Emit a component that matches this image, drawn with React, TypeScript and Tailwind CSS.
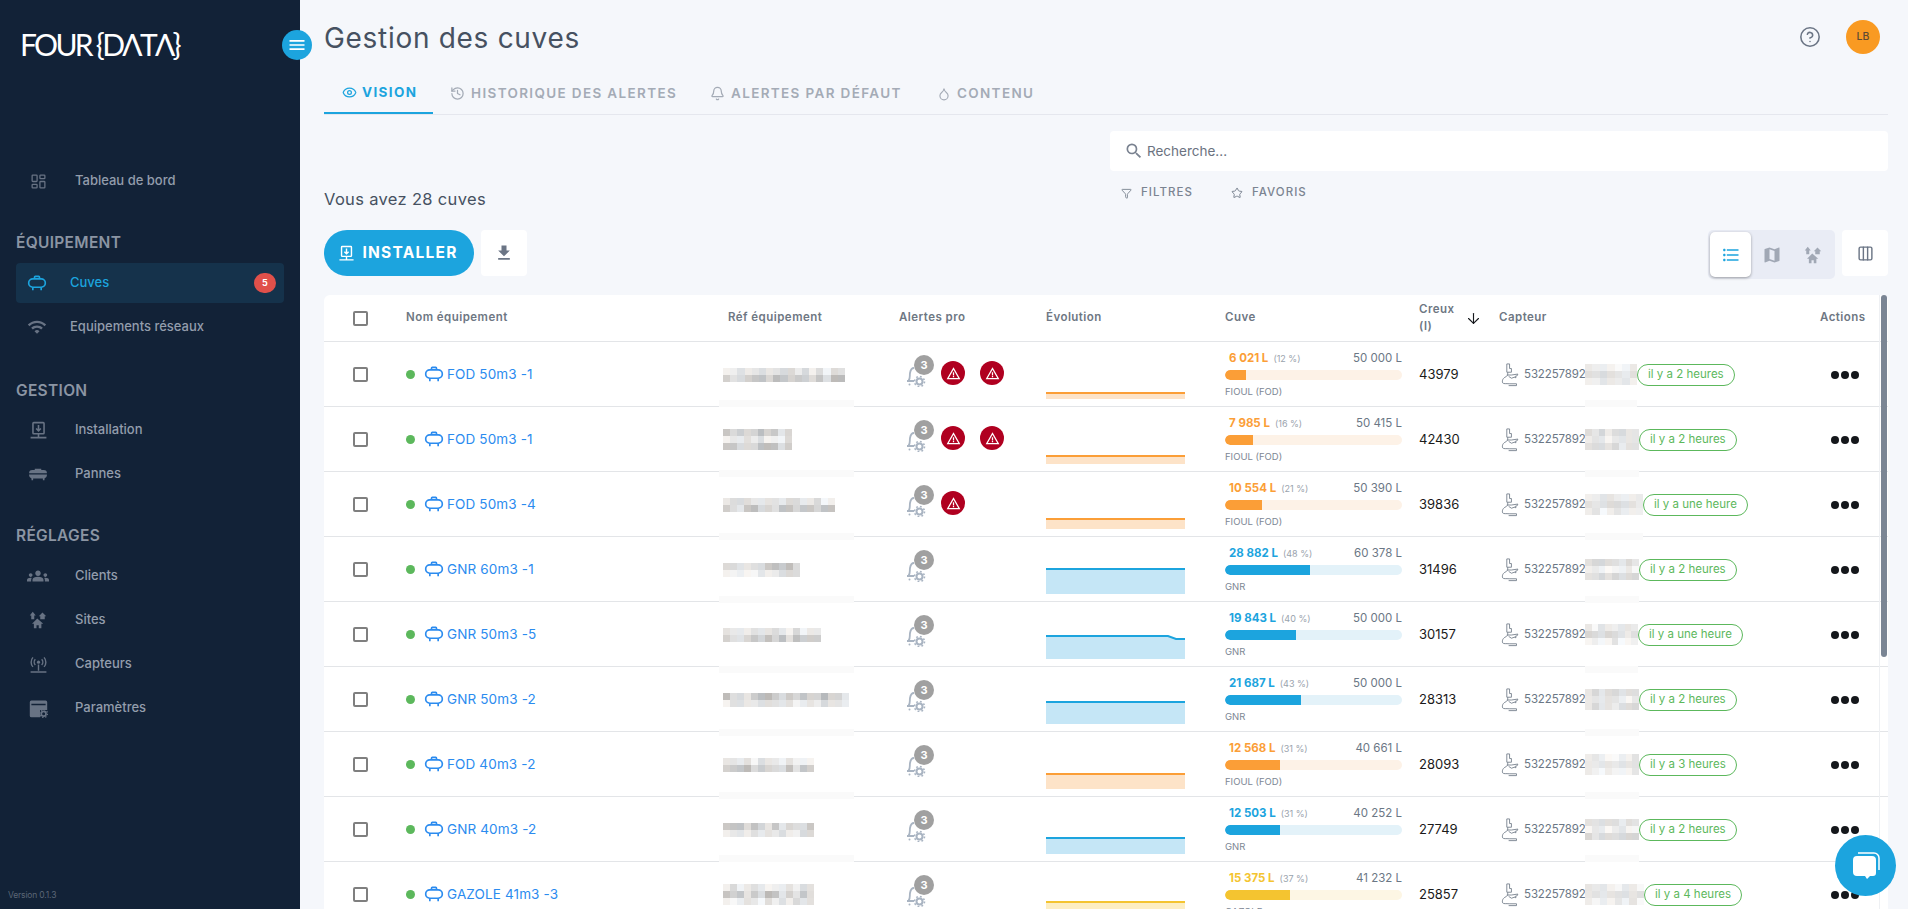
import { ArrowDown, Bell, Droplet, Eye, Funnel, Columns3, LayoutDashboard, Star, History, CircleHelp } from "lucide-react";
import { MdFileDownload, MdFormatListBulleted, MdGroups, MdMap, MdMenu, MdSearch, MdWarningAmber, MdWifi } from "react-icons/md";

const FONT = "font-['Inter','Liberation_Sans',sans-serif]";

type Fuel = "fod" | "gnr" | "gaz";

interface Row {
  name: string;
  vol: string;
  pct: number;
  cap: string;
  fuel: Fuel;
  creux: number;
  seen: string;
  alerts: number;
  refW: number;
  refRows: number;
  capW: number;
  band: number;
  line: number;
}

const rows: Row[] = [
  { name: "FOD 50m3 -1", vol: "6 021 L", pct: 12, cap: "50 000 L", fuel: "fod", creux: 43979, seen: "il y a 2 heures", alerts: 2, refW: 122, refRows: 2, capW: 52, band: -6, line: 51 },
  { name: "FOD 50m3 -1", vol: "7 985 L", pct: 16, cap: "50 415 L", fuel: "fod", creux: 42430, seen: "il y a 2 heures", alerts: 2, refW: 69, refRows: 3, capW: 54, band: -1, line: 49 },
  { name: "FOD 50m3 -4", vol: "10 554 L", pct: 21, cap: "50 390 L", fuel: "fod", creux: 39836, seen: "il y a une heure", alerts: 1, refW: 112, refRows: 2, capW: 58, band: -3, line: 47 },
  { name: "GNR 60m3 -1", vol: "28 882 L", pct: 48, cap: "60 378 L", fuel: "gnr", creux: 31496, seen: "il y a 2 heures", alerts: 0, refW: 77, refRows: 2, capW: 54, band: -5, line: 32 },
  { name: "GNR 50m3 -5", vol: "19 843 L", pct: 40, cap: "50 000 L", fuel: "gnr", creux: 30157, seen: "il y a une heure", alerts: 0, refW: 98, refRows: 2, capW: 53, band: 0, line: 34 },
  { name: "GNR 50m3 -2", vol: "21 687 L", pct: 43, cap: "50 000 L", fuel: "gnr", creux: 28313, seen: "il y a 2 heures", alerts: 0, refW: 126, refRows: 2, capW: 54, band: -2, line: 35 },
  { name: "FOD 40m3 -2", vol: "12 568 L", pct: 31, cap: "40 661 L", fuel: "fod", creux: 28093, seen: "il y a 3 heures", alerts: 0, refW: 91, refRows: 2, capW: 54, band: -4, line: 42 },
  { name: "GNR 40m3 -2", vol: "12 503 L", pct: 31, cap: "40 252 L", fuel: "gnr", creux: 27749, seen: "il y a 2 heures", alerts: 0, refW: 91, refRows: 2, capW: 54, band: -6, line: 41 },
  { name: "GAZOLE 41m3 -3", vol: "15 375 L", pct: 37, cap: "41 232 L", fuel: "gaz", creux: 25857, seen: "il y a 4 heures", alerts: 0, refW: 91, refRows: 3, capW: 59, band: -1, line: 40 },
];

const fuels = {
  fod: { label: "FIOUL (FOD)", text: "text-[#fb9e37]", fill: "bg-[#fb9e37]", track: "bg-[#fdf2e7]", stroke: "#fb9e37", area: "#fde3c8" },
  gnr: { label: "GNR", text: "text-[#1ca4de]", fill: "bg-[#1ca4de]", track: "bg-[#e3f2f9]", stroke: "#1ca4de", area: "#c5e6f6" },
  gaz: { label: "GAZOLE", text: "text-[#f4c430]", fill: "bg-[#f4c430]", track: "bg-[#fdf6e4]", stroke: "#f4c430", area: "#fdeec2" },
};

const COLS = "grid grid-cols-[82px_322px_171px_147px_179px_194px_80px_321px_1fr] items-center";

// tank drawn the same way in the menu and in the table
const TankIcon = ({ className }: { className?: string }) => (
  <svg viewBox="0 0 24 20" fill="none" stroke="currentColor" strokeWidth="2" className={className}>
    <rect x="2" y="4.5" width="20" height="10" rx="5" />
    <path d="M9 4.5V2.5a1 1 0 0 1 1-1h4a1 1 0 0 1 1 1v2M7 14.5V18M17 14.5V18" />
  </svg>
);

const PannesIcon = ({ className }: { className?: string }) => (
  <svg viewBox="0 0 24 16" fill="currentColor" className={className}>
    <path d="M5 2.5h3V1h8v1.500h3a4 4 0 0 1 4 4H1a4 4 0 0 1 4-4zM1 8h22v1a4 4 0 0 1-3 3.800V15h-2v-2H6v2H4v-2.200A4 4 0 0 1 1 9z" />
  </svg>
);

const InstallIcon = ({ className }: { className?: string }) => (
  <svg viewBox="0 0 24 24" fill="none" stroke="currentColor" strokeWidth="2" className={className}>
    <rect x="5" y="2" width="14" height="14" rx="1" />
    <path d="M12 5v7M9 9.500l3 3 3-3M12 16v5M2 21h20" />
  </svg>
);

const SitesIcon = ({ className }: { className?: string }) => (
  <svg viewBox="0 0 24 24" fill="currentColor" className={className}>
    <path d="M5 1 1 6h2v5h4V6h2zM18 2l-5 5h2v4h6V7h2zM11 10l-7 7h2.500v6H10v-4h3v4h3.500v-6H19z" />
  </svg>
);

const AntennaIcon = ({ className }: { className?: string }) => (
  <svg viewBox="0 0 24 24" fill="none" stroke="currentColor" strokeWidth="1.800" className={className}>
    <circle cx="12" cy="9" r="2" fill="currentColor" stroke="none" />
    <path d="M8 5.500a5 5 0 0 0 0 7M16 5.500a5 5 0 0 1 0 7M5 3a9 9 0 0 0 0 12M19 3a9 9 0 0 1 0 12M12 12v8M2 21.500h20" />
  </svg>
);

const ParamsIcon = ({ className }: { className?: string }) => (
  <svg viewBox="0 0 24 24" className={className}>
    <path fill="currentColor" d="M3 2h18a2 2 0 0 1 2 2v10h-9v9H3a2 2 0 0 1-2-2V4a2 2 0 0 1 2-2zm0 4v2h18V6z" />
    <circle cx="18.500" cy="18.500" r="3" fill="none" stroke="currentColor" strokeWidth="2.200" />
    <circle cx="18.500" cy="18.500" r="5" fill="none" stroke="currentColor" strokeWidth="1.400" strokeDasharray="1.800 2.100" />
  </svg>
);

// small hand-drawn probe in the sensor column
const ProbeIcon = () => (
  <svg viewBox="0 0 20 26" fill="none" stroke="#7b8490" strokeWidth="1" className="h-[24px] w-[19px] shrink-0">
    <path d="M6 1h3v5h2v4H6zM7 10v3l-2 2M6 13h5l7-1-1 2-2 .5 1 1.500-2-.5-3 1-3-2" />
    <path d="M5 15c-3 1-4.500 4-3.500 6.500 1 1.500 4 .5 7 1h8v2H8" />
  </svg>
);

const AlertBell = () => (
  <div className="relative h-[28px] w-[26px]">
    <svg viewBox="0 0 22 24" fill="none" stroke="#a9b4c2" strokeWidth="1.800" className="absolute bottom-0 left-0 h-[24px] w-[22px]">
      <path d="M2 18h7M3.500 18c2-3 1-5 1.500-8 .5-3 2-5 4-5" />
      <circle cx="4.500" cy="21.500" r="1" fill="#a9b4c2" stroke="none" />
      <circle cx="14.500" cy="18.500" r="3" strokeWidth="2" />
      <circle cx="14.500" cy="18.500" r="5" strokeWidth="1.600" strokeDasharray="1.800 2.100" />
    </svg>
    <span className="absolute right-[-3px] top-[-4px] flex h-[20px] w-[20px] items-center justify-center rounded-full bg-[#a0a0a0] text-[11px] font-bold text-white">3</span>
  </div>
);

// pixelated patch standing in for masked values
const Mosaic = ({ width, seed, rowsCount, light }: { width: number; seed: number; rowsCount: number; light?: boolean }) => {
  const cols = Math.max(1, Math.round(width / 7));
  return (
    <div className="flex flex-col" style={{ width }}>
      {Array.from({ length: rowsCount }).map((_, r) => (
        <div key={r} className="flex h-[7px]">
          {Array.from({ length: cols }).map((_, c) => {
            const n = Math.abs(Math.sin(seed * 12.9 + c * 78.2 + r * 37.7) * 43758.5) % 1;
            const dark = (r + seed) % 2 === 0;
            const shade = light
              ? Math.round((dark ? 212 : 226) + n * 24)
              : Math.round((dark ? 184 : 216) + n * (dark ? 48 : 32));
            const tint = c % 3 === 0 ? 3 : c % 3 === 1 ? 0 : -3;
            return <span key={c} className="flex-1" style={{ backgroundColor: `rgb(${shade + tint},${shade},${shade - tint})` }} />;
          })}
        </div>
      ))}
    </div>
  );
};

const Band = ({ left, width, offset }: { left: number; width: number; offset: number }) => (
  <span className="absolute h-[7px] bg-[#fafafa]" style={{ left, width, top: 64 + offset }} />
);

const Sparkline = ({ line, fuel, drop }: { line: number; fuel: Fuel; drop?: boolean }) => {
  const f = fuels[fuel];
  const d = drop
    ? `M0 ${line} H122 L130 ${line + 3} H139`
    : `M0 ${line} H139`;
  return (
    <svg viewBox="0 0 140 65" className="h-[65px] w-[140px]">
      <path d={`${d} V57 H0 Z`} fill={f.area} />
      <path d={d} fill="none" stroke={f.stroke} strokeWidth="2" />
    </svg>
  );
};

const NavItem = ({ icon, label }: { icon: React.ReactNode; label: string }) => (
  <div className="flex h-[40px] items-center pl-[24px] text-[13px] font-medium text-[#939dac]">
    <span className="flex w-[28px] justify-center text-[#687384]">{icon}</span>
    <span className="ml-[23px]">{label}</span>
  </div>
);

const SectionTitle = ({ children, className }: { children: string; className?: string }) => (
  <div className={`pl-[16px] text-[15.500px] font-semibold leading-[20px] tracking-[0.02em] text-[#8b95a3] ${className ?? ""}`}>{children}</div>
);

const Sidebar = () => (
  <aside className="relative flex h-screen w-[300px] shrink-0 flex-col bg-[#122237]">
    <div className="flex h-[161px] items-start pl-[20px] pt-[22px] font-['Lato',sans-serif] text-[30px] font-normal leading-[44px] tracking-[-0.09em] text-white">
      <span>FOUR</span>
      <span className="ml-[5px]">{"{"}DΛTΛ{"}"}</span>
    </div>
    <button className="absolute left-[282px] top-[30px] flex h-[30px] w-[30px] items-center justify-center rounded-full bg-[#1ca4de] text-white">
      <MdMenu size={20} />
    </button>

    <NavItem label="Tableau de bord" icon={<LayoutDashboard size={17} strokeWidth={1.800} />} />

    <SectionTitle className="mt-[32px]">ÉQUIPEMENT</SectionTitle>
    <div className="mx-[16px] mt-[10px] flex h-[40px] items-center rounded-[4px] bg-[#15324b] pl-[11px] pr-[8px] text-[13px] font-medium text-[#1ca4de]">
      <TankIcon className="h-[17px] w-[20px]" />
      <span className="ml-[23px] flex-1">Cuves</span>
      <span className="flex h-[20px] w-[22px] items-center justify-center rounded-full bg-[#e0504a] text-[9px] font-bold text-white">5</span>
    </div>
    <div className="mt-[4px] flex h-[40px] items-center pl-[27px] text-[13px] font-medium text-[#939dac]">
      <MdWifi size={20} className="text-[#687384]" />
      <span className="ml-[23px]">Equipements réseaux</span>
    </div>

    <SectionTitle className="mt-[34px]">GESTION</SectionTitle>
    <div className="mt-[9px]">
      <NavItem label="Installation" icon={<InstallIcon className="h-[19px] w-[19px]" />} />
      <div className="mt-[4px]">
        <NavItem label="Pannes" icon={<PannesIcon className="h-[13px] w-[20px]" />} />
      </div>
    </div>

    <SectionTitle className="mt-[32px]">RÉGLAGES</SectionTitle>
    <div className="mt-[10px] flex flex-col gap-[4px]">
      <NavItem label="Clients" icon={<MdGroups size={22} />} />
      <NavItem label="Sites" icon={<SitesIcon className="h-[18px] w-[18px]" />} />
      <NavItem label="Capteurs" icon={<AntennaIcon className="h-[19px] w-[19px]" />} />
      <NavItem label="Paramètres" icon={<ParamsIcon className="h-[19px] w-[19px]" />} />
    </div>

    <div className="mt-auto pb-[7px] pl-[8px] text-[8.500px] tracking-[-0.02em] text-[#5b6676]">Version 0.1.3</div>
  </aside>
);

const Tab = ({ icon, label, active, className }: { icon: React.ReactNode; label: string; active?: boolean; className?: string }) => (
  <div
    className={`flex h-[41px] items-center text-[13.500px] tracking-[0.1em] ${
      active ? "border-b-2 border-[#1ca4de] font-bold text-[#1ca4de]" : "font-semibold text-[#a4abb6]"
    } ${className ?? ""}`}
  >
    {icon}
    {label}
  </div>
);

const TableRow = ({ row, index }: { row: Row; index: number }) => {
  const f = fuels[row.fuel];
  return (
    <div className={`${COLS} h-[65px] border-b border-[#e3e5e8] last:border-b-0`}>
      <div className="pl-[29px]">
        <div className="h-[15px] w-[15px] rounded-[2px] border-2 border-[#7f7f7f]" />
      </div>
      <div className="flex items-center">
        <span className="h-[9px] w-[9px] rounded-full bg-[#5cb85c]" />
        <TankIcon className="ml-[9px] h-[17px] w-[20px] text-[#2b8bef]" />
        <span className="ml-[3px] text-[13.500px] tracking-[0.01em] text-[#2b8bef]">{row.name}</span>
      </div>
      <div className="relative -ml-[5px] flex items-center self-stretch">
        <Mosaic width={row.refW} seed={index + 1} rowsCount={row.refRows} />
        <Band left={-4} width={135} offset={row.band} />
      </div>
      <div className="flex items-center pb-[3px] pl-[6px]">
        <AlertBell />
        {row.alerts > 0 && (
          <div className="ml-[10px] flex gap-[15px]">
            {Array.from({ length: row.alerts }).map((_, i) => (
              <span key={i} className="flex h-[24px] w-[24px] items-center justify-center rounded-full bg-[#b00020] text-white">
                <MdWarningAmber size={15} />
              </span>
            ))}
          </div>
        )}
      </div>
      <Sparkline line={row.line} fuel={row.fuel} drop={index === 4} />
      <div className="w-[177px]">
        <div className="flex items-baseline justify-between pl-[4px] text-[11.500px] leading-[14px]">
          <span>
            <span className={`font-bold ${f.text}`}>{row.vol}</span>
            <span className="ml-[5px] text-[9px] text-[#9aa3ad]">({row.pct} %)</span>
          </span>
          <span className="text-[#6b7785]">{row.cap}</span>
        </div>
        <div className={`mt-[4px] h-[10px] overflow-hidden rounded-full ${f.track}`}>
          <div className={`h-full rounded-l-full ${f.fill}`} style={{ width: `${row.pct}%` }} />
        </div>
        <div className="mt-[6px] text-[9.500px] leading-[12px] text-[#7d8794]">{f.label}</div>
      </div>
      <div className="text-[13px] text-[#1a1a1a]">{row.creux}</div>
      <div className="relative flex items-center self-stretch pl-[2px]">
        <ProbeIcon />
        <span className="ml-[4px] w-[61px] shrink-0 text-[11.500px] tracking-[-0.01em] text-[#6b7785]">532257892</span>
        <Mosaic width={row.capW} seed={index + 21} rowsCount={3} light />
        <span className="z-10 flex h-[22px] items-center rounded-full border border-[#5cb85c] bg-white px-[10px] text-[11.500px] text-[#5cb85c]">{row.seen}</span>
        <Band left={86} width={row.capW} offset={row.band} />
      </div>
      <div className="flex gap-[2px] pl-[11px]">
        <span className="h-[8px] w-[8px] rounded-full bg-[#15181c]" />
        <span className="h-[8px] w-[8px] rounded-full bg-[#15181c]" />
        <span className="h-[8px] w-[8px] rounded-full bg-[#15181c]" />
      </div>
    </div>
  );
};

const App = () => (
  <div className={`flex h-screen overflow-hidden bg-[#f5f7fb] ${FONT}`}>
    <Sidebar />

    <main className="flex min-w-0 flex-1 flex-col pl-[24px] pr-[20px]">
      <header className="flex h-[73px] shrink-0 items-center justify-between">
        <h1 className="pt-[2px] text-[28px] font-normal tracking-[0.025em] text-[#465161]">Gestion des cuves</h1>
        <div className="flex items-center gap-[25px] pr-[8px]">
          <CircleHelp size={22} strokeWidth={1.700} className="text-[#6b7585]" />
          <span className="flex h-[34px] w-[34px] items-center justify-center rounded-full bg-[#f99a22] text-[10.500px] font-medium text-[#5d4a35]">LB</span>
        </div>
      </header>

      <nav className="flex shrink-0 border-b border-[#e5e7ee]">
        <Tab active className="w-[109px] pl-[18px]" label="VISION" icon={<Eye size={15} className="mr-[5px]" />} />
        <Tab className="ml-[17px] w-[260px]" label="HISTORIQUE DES ALERTES" icon={<History size={15} className="mr-[6px]" />} />
        <Tab className="w-[227px]" label="ALERTES PAR DÉFAUT" icon={<Bell size={15} className="mr-[6px]" />} />
        <Tab label="CONTENU" icon={<Droplet size={14} className="mr-[6px]" />} />
      </nav>

      <section className="flex h-[180px] shrink-0 justify-between">
        <div className="flex flex-col justify-end pb-[19px]">
          <p className="text-[16.500px] leading-[20px] tracking-[0.02em] text-[#465161]">Vous avez 28 cuves</p>
          <div className="mt-[21px] flex gap-[7px]">
            <button className="flex h-[46px] w-[150px] items-center justify-center gap-[7px] rounded-full bg-[#1ca4de] pr-[2px] text-[15.500px] font-bold tracking-[0.08em] text-white">
              <InstallIcon className="h-[17px] w-[17px]" />
              INSTALLER
            </button>
            <button className="flex h-[46px] w-[46px] items-center justify-center rounded-[4px] bg-white text-[#6b7585]">
              <MdFileDownload size={20} />
            </button>
          </div>
        </div>

        <div className="flex w-[778px] flex-col pt-[16px]">
          <div className="flex h-[40px] items-center rounded-[4px] bg-white pl-[14px] text-[13.500px] text-[#6b7280]">
            <MdSearch size={20} className="text-[#7a8290]" />
            <span className="ml-[3px]">Recherche...</span>
          </div>
          <div className="mt-[15px] flex h-[14px] items-center pl-[11px] text-[11.500px] font-medium tracking-[0.09em] text-[#7b8491]">
            <Funnel size={11} />
            <span className="ml-[9px]">FILTRES</span>
            <Star size={12} className="ml-[38px]" />
            <span className="ml-[9px]">FAVORIS</span>
          </div>
          <div className="mt-[30px] flex justify-end gap-[7px]">
            <div className="flex h-[49px] items-center rounded-[5px] bg-[#e9ecf5] px-[2px] text-[#a1a8b5]">
              <span className="flex h-[45px] w-[41px] items-center justify-center rounded-[5px] bg-white text-[#1ca4de] shadow-[0_1px_3px_rgba(0,0,0,0.35)]">
                <MdFormatListBulleted size={20} />
              </span>
              <span className="flex w-[41px] justify-center">
                <MdMap size={20} />
              </span>
              <span className="flex w-[41px] justify-center">
                <SitesIcon className="h-[18px] w-[18px]" />
              </span>
            </div>
            <span className="flex h-[46px] w-[46px] items-center justify-center rounded-[4px] bg-white text-[#6b7585]">
              <Columns3 size={17} />
            </span>
          </div>
        </div>
      </section>

      <div className="relative shrink-0 rounded-t-[6px] bg-white">
        <div className={`${COLS} h-[47px] border-b border-[#e3e5e8] text-[11.500px] font-semibold tracking-[0.04em] text-[#6e7783]`}>
          <div className="pl-[29px]">
            <div className="h-[15px] w-[15px] rounded-[2px] border-2 border-[#7f7f7f]" />
          </div>
          <div>Nom équipement</div>
          <div>Réf équipement</div>
          <div>Alertes pro</div>
          <div>Évolution</div>
          <div>Cuve</div>
          <div className="flex items-center">
            <span className="w-[44px] leading-[17px]">Creux (l)</span>
            <ArrowDown size={17} strokeWidth={1.600} className="ml-[2px] text-[#15181c]" />
          </div>
          <div>Capteur</div>
          <div>Actions</div>
        </div>
        {rows.map((row, i) => (
          <TableRow key={i} row={row} index={i} />
        ))}
        <div className="absolute bottom-0 right-[8px] top-0 w-px bg-[#eef0f3]" />
        <div className="absolute right-[1px] top-0 h-[362px] w-[6px] rounded-full bg-[#7a8594]" />
      </div>
    </main>

    <button className="fixed bottom-[13px] right-[12px] flex h-[61px] w-[61px] items-center justify-center rounded-full bg-[#1ca4de]">
      <svg viewBox="0 0 32 32" className="h-[32px] w-[32px]">
        <path d="M8 3h16a5 5 0 0 1 5 5v12" fill="none" stroke="#fff" strokeWidth="1.500" />
        <path d="M7 6h15a4 4 0 0 1 4 4v13a3 3 0 0 1-3 3h-3l-3 3-2-3H7a4 4 0 0 1-4-4V10a4 4 0 0 1 4-4z" fill="#fff" />
      </svg>
    </button>
  </div>
);

export default App;
